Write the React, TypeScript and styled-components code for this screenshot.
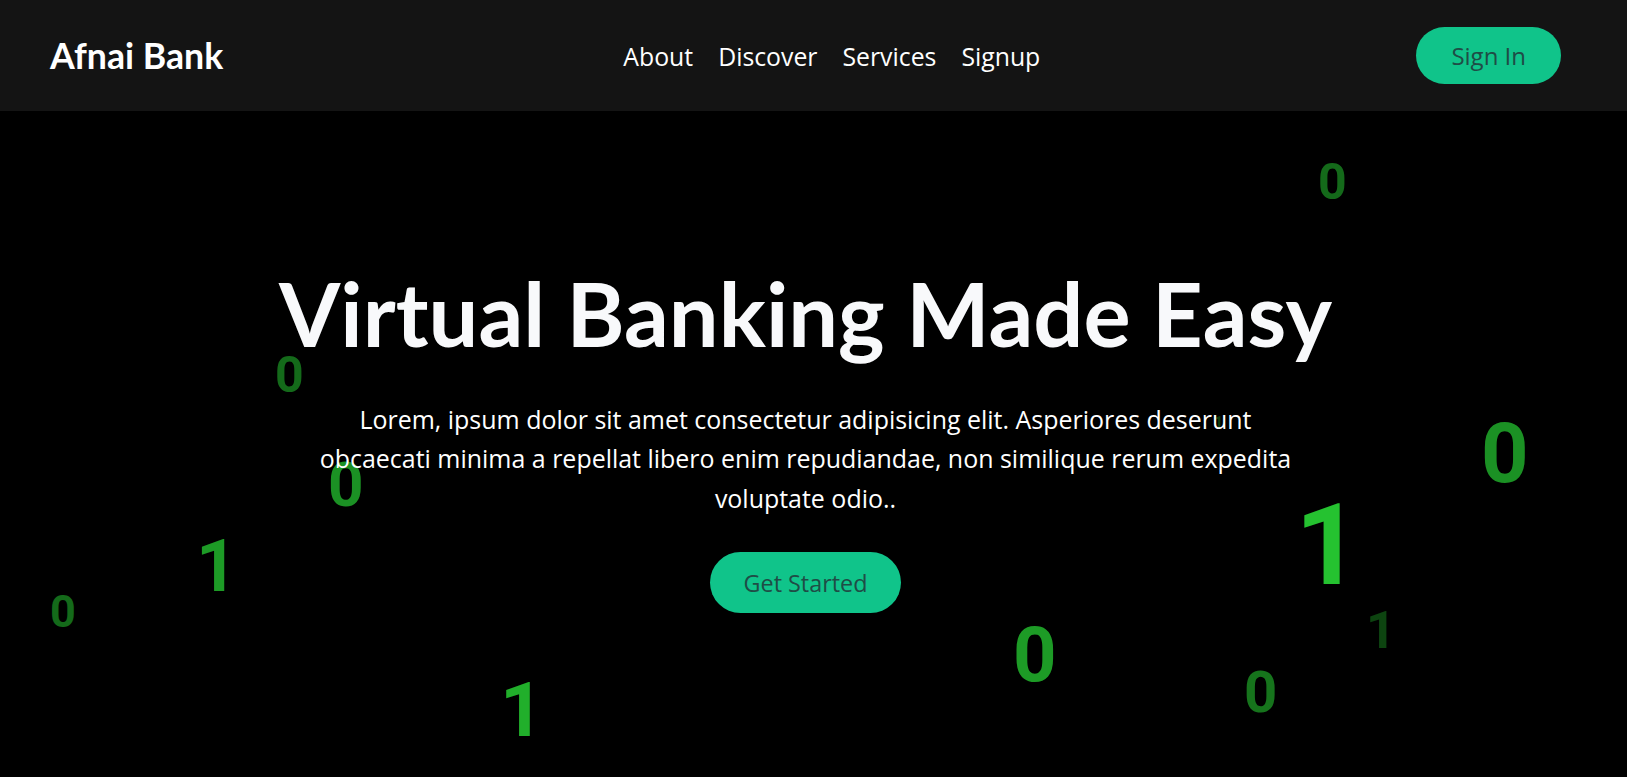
// Library Imports
import * as React from 'react';
import styled, { createGlobalStyle } from 'styled-components';

// Styling
const GlobalStyle = createGlobalStyle`
	* {
		box-sizing: border-box;
	}
	body {
		margin: 0;
		background-color: #000;
		font-family: "Open Sans", sans-serif;
	}
`

const Page = styled.div`
	display: flex;
	flex-direction: column;
	min-height: 100vh;
	background-color: #000;
`

const NavBar = styled.nav`
	display: flex;
	align-items: center;
	justify-content: space-between;
	height: 111px;
	padding: 0 66px 0 50px;
	background-color: #141414;
`

const Logo = styled.a`
	color: #fff;
	font-family: Lato, sans-serif;
	font-size: 2.23rem;
	font-weight: 700;
	text-decoration: none;
`

const NavLinks = styled.ul`
	display: flex;
	gap: 25px;
	margin: 0 0 0 24px;
	padding: 0;
	list-style: none;
`

const NavLink = styled.a`
	color: #fff;
	font-size: 1.55rem;
	text-decoration: none;
`

const PillButton = styled.button<{ $big?: boolean }>`
	height: ${({ $big }) => ($big ? '61px' : '57px')};
	padding: ${({ $big }) => ($big ? '0 34px' : '0 35px')};
	border: none;
	border-radius: 999px;
	background-color: #10c48a;
	color: #1f4d46;
	font-family: inherit;
	font-size: ${({ $big }) => ($big ? '1.46rem' : '1.5rem')};
	cursor: pointer;
`

const Hero = styled.main`
	position: relative;
	flex: 1;
	display: flex;
	flex-direction: column;
	align-items: center;
	justify-content: center;
	overflow: hidden;
	padding: 0 16px 14px 0;
`

const DigitLayer = styled.div`
	position: absolute;
	inset: 0;
	pointer-events: none;
`

const Digit = styled.span<{ $size: number; $fade: number }>`
	position: absolute;
	font-family: Roboto, sans-serif;
	font-weight: 700;
	line-height: 1;
	font-size: ${({ $size }) => $size}px;
	color: #25c230;
	opacity: ${({ $fade }) => $fade};
`

const Content = styled.div`
	position: relative;
	z-index: 1;
	display: flex;
	flex-direction: column;
	align-items: center;
	text-align: center;
`

const Title = styled.h1`
	margin: 0;
	color: #f8f9fb;
	font-family: Lato, sans-serif;
	font-size: 5.52rem;
	font-weight: 700;
	line-height: 1.2;
`

const Lead = styled.p`
	max-width: 990px;
	margin: 33px 0 34px;
	color: #fff;
	font-size: 1.56rem;
	line-height: 1.58;
`

// Data
const digits = [
	{ v: '0', x: 1318, y: 46, s: 50, o: 0.55 },
	{ v: '0', x: 275, y: 239, s: 50, o: 0.55 },
	{ v: '0', x: 328, y: 343, s: 62, o: 0.75 },
	{ v: '1', x: 196, y: 420, s: 72, o: 0.8 },
	{ v: '0', x: 50, y: 478, s: 45, o: 0.55 },
	{ v: '1', x: 500, y: 561, s: 76, o: 0.9 },
	{ v: '0', x: 1013, y: 506, s: 76, o: 0.8 },
	{ v: '0', x: 1244, y: 552, s: 58, o: 0.6 },
	{ v: '1', x: 1366, y: 494, s: 52, o: 0.35 },
	{ v: '1', x: 1295, y: 377, s: 114, o: 1 },
	{ v: '0', x: 1481, y: 301, s: 83, o: 0.75 },
	{ v: '1', x: 1214, y: 304, s: 16, o: 0.3 },
]

// Render
const App = () => {
	return (
		<>
			<GlobalStyle />
			<Page>
				<NavBar>
					<Logo href="#">Afnai Bank</Logo>
					<NavLinks>
						<li><NavLink href="#">About</NavLink></li>
						<li><NavLink href="#">Discover</NavLink></li>
						<li><NavLink href="#">Services</NavLink></li>
						<li><NavLink href="#">Signup</NavLink></li>
					</NavLinks>
					<PillButton>Sign In</PillButton>
				</NavBar>
				<Hero>
					<DigitLayer>
						{digits.map((d, i) => (
							<Digit key={i} $size={d.s} $fade={d.o} style={{ left: d.x, top: d.y }}>
								{d.v}
							</Digit>
						))}
					</DigitLayer>
					<Content>
						<Title>Virtual Banking Made Easy</Title>
						<Lead>
							Lorem, ipsum dolor sit amet consectetur adipisicing elit. Asperiores deserunt
							obcaecati minima a repellat libero enim repudiandae, non similique rerum expedita
							voluptate odio..
						</Lead>
						<PillButton $big>Get Started</PillButton>
					</Content>
				</Hero>
			</Page>
		</>
	)
}

export default App;
